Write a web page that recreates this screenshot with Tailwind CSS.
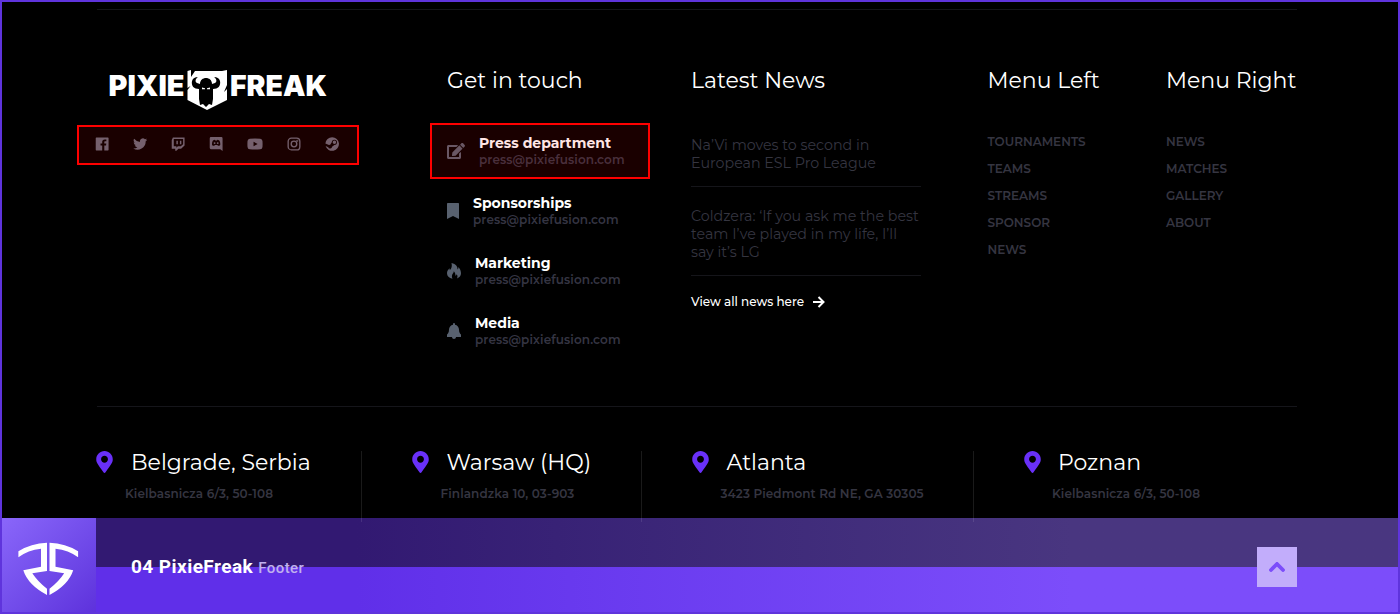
<!DOCTYPE html>
<html lang="en">
<head>
<meta charset="utf-8">
<title>PixieFreak Footer</title>
<script src="https://cdn.jsdelivr.net/npm/@tailwindcss/browser@4"></script>
</head>
<body class="bg-black">
<div class="relative flex h-[614px] w-[1400px] flex-col overflow-hidden border-2 border-[#5f34dc] bg-black font-['Montserrat','Inter',sans-serif] text-white">
  <footer class="relative z-20 ml-[95px] mt-[7px] flex h-[509px] w-[1200px] shrink-0 flex-col border-t border-[#15151a]">
    <section class="flex h-[396px] shrink-0 pt-[56px]">
      <div class="w-[350px] shrink-0">
        <div class="ml-3 mt-[3px] flex h-[42px] w-[220px] items-start">
          <svg width="220" height="42" viewBox="0 0 220 42" fill="#fff">
            <g font-family="Inter" font-weight="900" font-size="28.5">
              <text x="-0.5" y="27" textLength="76" lengthAdjust="spacingAndGlyphs">PIXIE</text>
              <text x="121" y="27" textLength="97" lengthAdjust="spacingAndGlyphs">FREAK</text>
            </g>
            <path d="M78.500 2 82 1v7l4-6h27l5-1v15l-3 7 3-3v11l-20 10-19.500-10v-10l3-4-3 2z"/>
            <path fill="#000" d="M90 20c-5 0-8-3-7-8 1-3 3-4 6-4-3 2-3 5-1 6l3 1c0-4 3-6 6-6s6 2 6 6l3-1c2-1 2-4-1-6 3 0 5 1 6 4 1 5-2 8-7 8v10l-1 6-3-1-3 3-3-3-3 1-1-6z"/>
            <path d="m93 18.500 3 .7v1h-3zm8 0-3 .7v1h3z"/>
          </svg>
        </div>
        <div class="ml-[-2px] mt-[23px] flex h-[20px] items-center gap-[23.800px] text-[#656b79]">
          <svg class="shrink-0" width="14.300" height="14" viewBox="0 0 24 24" fill="currentColor"><path d="M2 1h20q1 0 1 1v20q0 1-1 1h-6.300v-8.500h3l.4-3.400h-3.400V9c0-1 .3-1.700 1.700-1.700h1.800V4.200h-2.700c-3 0-4.400 1.800-4.400 4.500v2.400H9.200v3.400h2.900V23H2q-1 0-1-1V2q0-1 1-1z"/></svg>
          <svg class="shrink-0" width="14.300" height="14" viewBox="0 0 24 24" fill="currentColor"><path d="M24 4.600a10 10 0 0 1-2.800.8 5 5 0 0 0 2.200-2.700 10 10 0 0 1-3.200 1.200 4.900 4.900 0 0 0-8.400 4.500A14 14 0 0 1 1.700 3.100a4.900 4.900 0 0 0 1.500 6.600 5 5 0 0 1-2.200-.6 4.900 4.900 0 0 0 3.900 4.900 5 5 0 0 1-2.200.1 4.900 4.900 0 0 0 4.600 3.400A10 10 0 0 1 0 19.500a14 14 0 0 0 21.500-12.400A10 10 0 0 0 24 4.600z"/></svg>
          <svg class="shrink-0" width="14.300" height="14" viewBox="0 0 24 24" fill="currentColor"><path fill-rule="evenodd" d="M3 1h20v13.500L17 20h-4.500L9 23.500H7V20H1V5zm1.500 2.500V16H9v2.500l2.500-2.500h5l4-3.500v-9zM9 6.500h2.500v6H9zm6 0h2.500v6H15z"/></svg>
          <svg class="shrink-0" width="14.300" height="14" viewBox="0 0 24 24" fill="currentColor"><path fill-rule="evenodd" d="M3 0h18q2 0 2 2.500V24l-4-3H3Q1 21 1 18.500v-16Q1 0 3 0zm3.500 6C5.300 8.200 4.700 10.500 5 13.500c1 1.300 2.500 1.700 4 1.500l.8-1.300h4.400L15 15c1.500.2 3-.2 4-1.500.3-3-.3-5.300-1.500-7.500C16.300 5.200 15 5 14 4.900l-.5 1h-3l-.5-1C9 5 7.700 5.200 6.500 6zm2.800 2.800a1.600 1.600 0 1 1 0 3.200 1.600 1.600 0 0 1 0-3.200zm5.400 0a1.600 1.600 0 1 1 0 3.200 1.600 1.600 0 0 1 0-3.200z"/></svg>
          <svg class="shrink-0" width="16" height="14" viewBox="0 0 26 24" fill="currentColor"><path fill-rule="evenodd" d="M4 3q9-1 18 0 3.500.3 3.800 4 .4 5 0 10-.3 3.700-3.800 4-9 1-18 0-3.500-.3-3.800-4-.4-5 0-10Q.5 3.300 4 3zm6.500 5v8l7-4z"/></svg>
          <svg class="shrink-0" width="14" height="14" viewBox="0 0 24 24" fill="none" stroke="currentColor" stroke-width="2.300"><rect x="2" y="2" width="20" height="20" rx="5.500"/><circle cx="12" cy="12" r="4.800"/><circle cx="17.700" cy="6.300" r=".6"/></svg>
          <svg class="shrink-0" width="14.300" height="14" viewBox="0 0 24 24"><path fill="currentColor" fill-rule="evenodd" d="M12 .3A11.700 11.700 0 1 1 .8 15.500l4.500 1.900a3.300 3.300 0 0 0 6.500-.9l4-2.900a4.500 4.500 0 1 0-4.400-4.600l-2.800 4.200a3.300 3.300 0 0 0-2 .5L.4 11A11.700 11.700 0 0 1 12 .3zM15.900 6a3 3 0 1 1 0 6 3 3 0 0 1 0-6z"/></svg>
        </div>
      </div>
      <div class="w-[244px] shrink-0">
        <h2 class="pt-[1px] text-[22px] leading-[28px]">Get in touch</h2>
        <ul class="mt-[40px] flex flex-col gap-[26px] text-[#58616f]">
          <li class="flex h-[34px] items-center gap-[14px]">
            <svg class="mb-[2px]" width="18" height="16" viewBox="0 0 576 512" fill="currentColor"><path d="M402.600 83.200l90.200 90.200c3.800 3.800 3.800 10 0 13.800L274.400 405.600l-92.800 10.300c-12.400 1.400-22.900-9.100-21.500-21.500l10.300-92.800L388.800 83.200c3.800-3.800 10-3.800 13.800 0zm162-22.900l-48.800-48.800c-15.200-15.200-39.900-15.200-55.200 0l-35.400 35.400c-3.800 3.800-3.800 10 0 13.800l90.200 90.200c3.800 3.800 10 3.800 13.800 0l35.400-35.400c15.200-15.300 15.200-40 0-55.200zM384 346.200V448H64V128h229.800c3.200 0 6.200-1.300 8.500-3.500l40-40c7.600-7.600 2.200-20.500-8.500-20.500H48C21.500 64 0 85.500 0 112v352c0 26.500 21.500 48 48 48h352c26.500 0 48-21.500 48-48V306.200c0-10.700-12.900-16-20.500-8.500l-40 40c-2.200 2.300-3.500 5.300-3.500 8.500z"/></svg>
            <div class="mb-[1px]"><h3 class="text-[14px] font-bold leading-[17px] text-white">Press department</h3><p class="text-[12px] font-semibold leading-[16px] tracking-[0.12px] text-[#353543]">press@pixiefusion.com</p></div>
          </li>
          <li class="flex h-[34px] items-center gap-[14px]">
            <svg class="mb-[2px]" width="12" height="16" viewBox="0 0 384 512" fill="currentColor"><path d="M0 512V24C0 8 8 0 24 0h336c16 0 24 8 24 24v488L192 416z"/></svg>
            <div class="mb-[1px]"><h3 class="text-[14px] font-bold leading-[17px] text-white">Sponsorships</h3><p class="text-[12px] font-semibold leading-[16px] tracking-[0.12px] text-[#353543]">press@pixiefusion.com</p></div>
          </li>
          <li class="flex h-[34px] items-center gap-[14px]">
            <svg class="mb-[2px]" width="14" height="16" viewBox="0 0 14 16" fill="currentColor"><path d="M4.500 0c4.500 1 6.200 3.500 6 6.500.8-.5 1-1.500.8-2.500 1.900 2 2.700 4 2.700 6.300 0 2.400-1.500 4.200-4 5.200.8-1.500.6-3-.3-4.200-.2.800-.6 1.200-1.300 1.500C8.500 11 8 9.500 6.800 8.300c.1 1.900-1.900 2.700-1.900 4.700 0 1 .2 1.900.6 2.700C2 15 0 13 0 10.300c0-2 1-3.500 2.500-5l.3 1.900C4.800 5.500 5.200 3 4.500 0z"/></svg>
            <div class="mb-[1px]"><h3 class="text-[14px] font-bold leading-[17px] text-white">Marketing</h3><p class="text-[12px] font-semibold leading-[16px] tracking-[0.12px] text-[#353543]">press@pixiefusion.com</p></div>
          </li>
          <li class="flex h-[34px] items-center gap-[14px]">
            <svg class="mb-[2px]" width="14" height="16" viewBox="0 0 448 512" fill="currentColor"><path d="M224 512c35.300 0 64-28.600 64-64H160c0 35.400 28.700 64 64 64zm215.400-149.700c-19.300-20.800-55.500-52-55.500-154.300 0-77.700-54.500-139.900-127.900-155.200V32a32 32 0 1 0-64 0v20.800C118.600 68.100 64.100 130.300 64.100 208c0 102.300-36.200 133.500-55.500 154.300A31.300 31.300 0 0 0 0 384v64h448v-64c0-7.600-2.700-15.500-8.600-21.700z"/></svg>
            <div class="mb-[1px]"><h3 class="text-[14px] font-bold leading-[17px] text-white">Media</h3><p class="text-[12px] font-semibold leading-[16px] tracking-[0.12px] text-[#353543]">press@pixiefusion.com</p></div>
          </li>
        </ul>
      </div>
      <div class="w-[297px] shrink-0">
        <h2 class="pt-[1px] text-[22px] leading-[28px]">Latest News</h2>
        <div class="mt-[41px] w-[230px] text-[14.250px] leading-[18px] text-[#353540]">
          <p class="border-b border-[#15151a] pb-[14px]">Na’Vi moves to second in<br>European ESL Pro League</p>
          <p class="mt-[20px] whitespace-nowrap border-b border-[#15151a] pb-[14px]">Coldzera: ‘If you ask me the best<br>team I’ve played in my life, I’ll<br>say it’s LG</p>
        </div>
        <a class="mt-[16px] flex items-center gap-[9px] text-[12px] font-medium leading-[20px]">View all news here
          <svg width="12" height="12" viewBox="0 0 12 12" fill="none" stroke="#fff" stroke-width="2"><path d="M0 6h10M5.500 1l5 5-5 5"/></svg>
        </a>
      </div>
      <div class="w-[178px] shrink-0">
        <h2 class="ml-[-0.500px] pt-[1px] text-[22px] leading-[28px]">Menu Left</h2>
        <ul class="ml-[-0.500px] mt-[33px] text-[12px] font-semibold leading-[27px] text-[#353541]"><li>TOURNAMENTS</li><li>TEAMS</li><li>STREAMS</li><li>SPONSOR</li><li>NEWS</li></ul>
      </div>
      <div class="shrink-0">
        <h2 class="whitespace-nowrap pt-[1px] text-[22px] leading-[28px]">Menu Right</h2>
        <ul class="mt-[33px] text-[12px] font-semibold leading-[27px] text-[#353541]"><li>NEWS</li><li>MATCHES</li><li>GALLERY</li><li>ABOUT</li></ul>
      </div>
    </section>
    <section class="flex border-t border-[#15151a] pt-[44px]">
      <div class="flex h-[71px] w-[265px] shrink-0 border-r border-white/10">
        <svg class="ml-[-1px] shrink-0" width="17" height="22" viewBox="0 0 384 512" fill="#6930f8"><path d="M172.300 501.700C27 291 0 269.400 0 192 0 86 86 0 192 0s192 86 192 192c0 77.400-27 99-172.300 309.700-9.500 13.800-29.900 13.800-39.400 0zM192 272c44.200 0 80-35.800 80-80s-35.800-80-80-80-80 35.800-80 80 35.800 80 80 80z"/></svg>
        <div class="ml-[12px] mt-[-2px] whitespace-nowrap"><h2 class="ml-[6px] text-[22px] leading-[28px]">Belgrade, Serbia</h2><p class="mt-[7px] text-[12px] font-semibold leading-[20px] tracking-[0.1px] text-[#353541]">Kielbasnicza 6/3, 50-108</p></div>
      </div>
      <div class="flex h-[71px] w-[280px] shrink-0 border-r border-white/10 pl-[50px]">
        <svg class="shrink-0" width="17" height="22" viewBox="0 0 384 512" fill="#6930f8"><path d="M172.300 501.700C27 291 0 269.400 0 192 0 86 86 0 192 0s192 86 192 192c0 77.400-27 99-172.300 309.700-9.500 13.800-29.900 13.800-39.400 0zM192 272c44.200 0 80-35.800 80-80s-35.800-80-80-80-80 35.800-80 80 35.800 80 80 80z"/></svg>
        <div class="ml-[11.500px] mt-[-2px] whitespace-nowrap"><h2 class="ml-[6px] text-[22px] leading-[28px]">Warsaw (HQ)</h2><p class="mt-[7px] text-[12px] font-semibold leading-[20px] tracking-[0.1px] text-[#353541]">Finlandzka 10, 03-903</p></div>
      </div>
      <div class="flex h-[71px] w-[332px] shrink-0 border-r border-white/10 pl-[50px]">
        <svg class="shrink-0" width="17" height="22" viewBox="0 0 384 512" fill="#6930f8"><path d="M172.300 501.700C27 291 0 269.400 0 192 0 86 86 0 192 0s192 86 192 192c0 77.400-27 99-172.300 309.700-9.500 13.800-29.900 13.800-39.400 0zM192 272c44.200 0 80-35.800 80-80s-35.800-80-80-80-80 35.800-80 80 35.800 80 80 80z"/></svg>
        <div class="ml-[11.500px] mt-[-2px] whitespace-nowrap"><h2 class="ml-[6px] text-[22px] leading-[28px]">Atlanta</h2><p class="mt-[7px] text-[12px] font-semibold leading-[20px] tracking-[0.1px] text-[#353541]">3423 Piedmont Rd NE, GA 30305</p></div>
      </div>
      <div class="flex h-[71px] grow pl-[50px]">
        <svg class="shrink-0" width="17" height="22" viewBox="0 0 384 512" fill="#6930f8"><path d="M172.300 501.700C27 291 0 269.400 0 192 0 86 86 0 192 0s192 86 192 192c0 77.400-27 99-172.300 309.700-9.500 13.800-29.900 13.800-39.400 0zM192 272c44.200 0 80-35.800 80-80s-35.800-80-80-80-80 35.800-80 80 35.800 80 80 80z"/></svg>
        <div class="ml-[11px] mt-[-2px] whitespace-nowrap"><h2 class="ml-[6px] text-[22px] leading-[28px]">Poznan</h2><p class="mt-[7px] text-[12px] font-semibold leading-[20px] tracking-[0.1px] text-[#353541]">Kielbasnicza 6/3, 50-108</p></div>
      </div>
    </section>
  </footer>
  <div class="relative z-10 flex h-[94px] w-full shrink-0">
    <div class="flex w-[94px] shrink-0 items-center justify-center bg-linear-to-br from-[#8a66fa] to-[#5e31dc]">
      <svg width="62" height="56" viewBox="0 0 62 56" class="mt-[8px]" fill="#fff"><path d="M.4 10.300Q13 2.200 29 1.700V30l-14.700 2.300Q20 41 29 47.700V54Q10 44 5.300 29.300L23 25.700v-18Q10 9 .4 16.300z"/><path d="M60.100 10.300Q47.500 2.200 31.500 1.700V30l14.700 2.300Q40.500 41 31.500 47.700V54q19-10 23.700-24.700L37.500 25.700v-18q13 1.300 22.600 8.600z"/></svg>
    </div>
    <div class="relative flex grow items-center justify-between bg-linear-to-r from-[#602fe9] from-20% to-[#7c4dfa] to-75% pl-[35px] pr-[101px]">
      <div class="absolute inset-x-0 top-0 h-[49px] bg-linear-to-r from-[#321972] from-20% to-[#493680] to-75%"></div>
      <p class="relative mt-[5px] flex items-baseline gap-[5px] font-['Roboto']"><span class="text-[19px] font-bold leading-[24px] tracking-[0.45px]">04 PixieFreak</span><span class="text-[15px] font-medium leading-[24px] tracking-[0.45px] text-[#c0b0ee]">Footer</span></p>
      <div class="relative mt-[4px] flex size-[40px] items-center justify-center bg-[#c2adfb]"><svg width="16" height="10" viewBox="0 0 16 10" fill="none" stroke="#7c4dfa" stroke-width="3.800" stroke-linecap="round"><path d="m2 8 6-6 6 6"/></svg></div>
    </div>
  </div>
  <div class="absolute left-[75px] top-[123px] z-30 h-[40px] w-[282px] border-2 border-[#f00] bg-[#ff0000]/10"></div>
  <div class="absolute left-[428px] top-[121px] z-30 h-[56px] w-[220px] border-2 border-[#f00] bg-[#ff0000]/10"></div>
</div>
</body>
</html>
